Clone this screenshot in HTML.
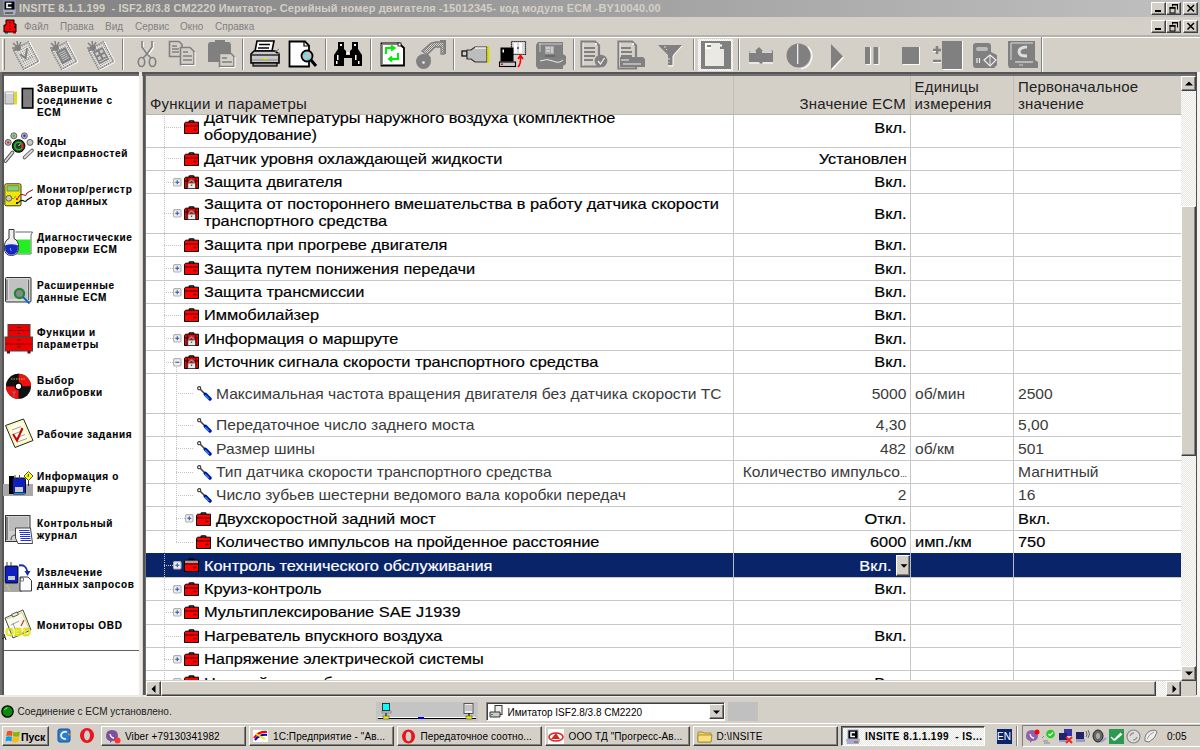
<!DOCTYPE html><html><head><meta charset="utf-8"><style>
*{margin:0;padding:0;box-sizing:border-box}
html,body{width:1200px;height:750px;overflow:hidden;background:#d4d0c8;font-family:"Liberation Sans", sans-serif;position:relative}
div,svg{position:absolute}
.ic{position:absolute}
.row{position:absolute;left:146px;width:1035px;border-bottom:1px solid #c8c8c8}
.row.sel{background:#0a246a}
.vl{position:absolute;top:0;bottom:-1px;width:1px;background:#c8c8c8}
.row.sel .vl{background:#b8bccc}
.hdot{height:1px;background-image:linear-gradient(90deg,#c4c4c4 50%,transparent 50%);background-size:2px 1px}
.vdot{width:1px;background-image:linear-gradient(180deg,#c4c4c4 50%,transparent 50%);background-size:1px 2px}
.tb{font-size:15px;line-height:18px;white-space:nowrap;transform:scaleX(1.09);transform-origin:0 0;-webkit-text-stroke:0.18px currentColor}

.tr{font-size:15px;line-height:18px;white-space:nowrap;transform:scaleX(1.04);transform-origin:0 0}
div.ra{transform-origin:100% 0}
.hd{font-size:15px;line-height:17px;letter-spacing:0.2px;color:#222;white-space:nowrap}
.lp{font-size:10px;font-weight:bold;line-height:12px;letter-spacing:0.7px;color:#000;white-space:nowrap;-webkit-text-stroke:0.15px #000}
.ddb{background:#d4d0c8;border-top:1px solid #fff;border-left:1px solid #fff;border-right:1px solid #404040;border-bottom:1px solid #404040;box-shadow:inset -1px -1px #808080}
.btn{background:#d4d0c8;border-top:1px solid #fff;border-left:1px solid #fff;border-right:1px solid #404040;border-bottom:1px solid #404040;box-shadow:inset -1px -1px #808080}
.sep{width:2px;border-left:1px solid #808080;border-right:1px solid #fff}
.dither{background-color:#e6e4df;background-image:linear-gradient(45deg,#fff 25%,transparent 25%,transparent 75%,#fff 75%),linear-gradient(45deg,#fff 25%,transparent 25%,transparent 75%,#fff 75%);background-size:2px 2px;background-position:0 0,1px 1px}
.tbtn{height:20px;top:726px;width:145px;font-size:10px;line-height:18px;white-space:nowrap;overflow:hidden;color:#000}
</style></head><body>
<div style="left:0;top:0;width:1200px;height:16.5px;background:linear-gradient(90deg,#808080,#c0c0c0)"></div>
<svg style="left:1px;top:0px" width="16" height="16" viewBox="0 0 16 16"><rect x="3" y="1" width="11" height="9" fill="#000" stroke="#9aa0d0" stroke-width="1"/><path d="M10.5 3.5 H6 V7.5 H10.5" stroke="#fff" stroke-width="1.6" fill="none"/><path d="M2 10 H15 L14 15 H3 Z" fill="#a8acc8"/><rect x="4" y="12" width="8" height="2" fill="#6b6b4a"/></svg>
<div style="left:19px;top:2px;font-size:11px;font-weight:bold;line-height:13px;letter-spacing:0.11px;color:#d4d0c8;white-space:pre">INSITE 8.1.1.199  - ISF2.8/3.8 CM2220 Имитатор- Серийный номер двигателя -15012345- код модуля ECM -BY10040.00</div>
<div class="btn" style="left:1151px;top:2px;width:15px;height:13px"><svg style="left:3px;top:7px" width="6" height="3"><rect x="0" y="0" width="6" height="2" fill="#000"/></svg></div><div class="btn" style="left:1166px;top:2px;width:15px;height:13px"><svg style="left:2px;top:1px" width="10" height="10" viewBox="0 0 10 10"><path d="M3.5 0.5 H8.5 V5.5 M3.5 1 V2.5" stroke="#000" stroke-width="1" fill="none"/><rect x="3" y="0" width="6" height="1.5" fill="#000"/><rect x="1" y="4" width="5" height="5" fill="none" stroke="#000" stroke-width="1"/><rect x="0.5" y="3" width="6" height="1.6" fill="#000"/></svg></div><div class="btn" style="left:1183px;top:2px;width:15px;height:13px"><svg style="left:2px;top:1px" width="10" height="9" viewBox="0 0 10 9"><path d="M1.5 1 L8 7.5 M8 1 L1.5 7.5" stroke="#000" stroke-width="1.5"/></svg></div>
<svg style="left:2px;top:18px" width="16" height="16" viewBox="0 0 16 16"><path d="M4 2 H12 V6 H14 V14 H2 V7 H4 Z" fill="#f00" stroke="#000" stroke-width="1"/><rect x="7" y="4" width="1.5" height="1.2" fill="#000"/><rect x="7" y="7" width="1.5" height="1.2" fill="#000"/><rect x="7" y="10" width="1.5" height="1.2" fill="#000"/><rect x="12" y="8" width="1.5" height="2" fill="#000"/><rect x="3" y="14" width="3" height="1.5" fill="#044"/><rect x="11" y="14" width="3" height="1.5" fill="#a00"/></svg>
<div style="left:24px;top:20px;font-size:10px;line-height:13px;color:#808080;white-space:nowrap">Файл</div>
<div style="left:60px;top:20px;font-size:10px;line-height:13px;color:#808080;white-space:nowrap">Правка</div>
<div style="left:105px;top:20px;font-size:10px;line-height:13px;color:#808080;white-space:nowrap">Вид</div>
<div style="left:135px;top:20px;font-size:10px;line-height:13px;color:#808080;white-space:nowrap">Сервис</div>
<div style="left:180px;top:20px;font-size:10px;line-height:13px;color:#808080;white-space:nowrap">Окно</div>
<div style="left:215px;top:20px;font-size:10px;line-height:13px;color:#808080;white-space:nowrap">Справка</div>
<div class="btn" style="left:1151px;top:20px;width:15px;height:13px"><svg style="left:3px;top:7px" width="6" height="3"><rect x="0" y="0" width="6" height="2" fill="#000"/></svg></div><div class="btn" style="left:1166px;top:20px;width:15px;height:13px"><svg style="left:2px;top:1px" width="10" height="10" viewBox="0 0 10 10"><path d="M3.5 0.5 H8.5 V5.5 M3.5 1 V2.5" stroke="#000" stroke-width="1" fill="none"/><rect x="3" y="0" width="6" height="1.5" fill="#000"/><rect x="1" y="4" width="5" height="5" fill="none" stroke="#000" stroke-width="1"/><rect x="0.5" y="3" width="6" height="1.6" fill="#000"/></svg></div><div class="btn" style="left:1183px;top:20px;width:15px;height:13px"><svg style="left:2px;top:1px" width="10" height="9" viewBox="0 0 10 9"><path d="M1.5 1 L8 7.5 M8 1 L1.5 7.5" stroke="#000" stroke-width="1.5"/></svg></div>
<div style="left:0;top:35px;width:1200px;height:2px;background:#b4b2ad"></div>
<div style="left:0;top:37px;width:1200px;height:1px;background:#fff"></div>
<div style="left:2px;top:39px;width:1px;height:31px;background:#fff"></div><div style="left:4px;top:39px;width:1px;height:31px;background:#808080"></div>
<div class="sep" style="left:122px;top:39px;height:31px"></div>
<div class="sep" style="left:242px;top:39px;height:31px"></div>
<div class="sep" style="left:325px;top:39px;height:31px"></div>
<div class="sep" style="left:370px;top:39px;height:31px"></div>
<div class="sep" style="left:453px;top:39px;height:31px"></div>
<div class="sep" style="left:573px;top:39px;height:31px"></div>
<div class="sep" style="left:693px;top:39px;height:31px"></div>
<div class="sep" style="left:738px;top:39px;height:31px"></div>
<div style="left:1041px;top:37px;width:1px;height:35px;background:#808080"></div><div style="left:1042px;top:37px;width:1px;height:35px;background:#fff"></div>
<svg style="left:10px;top:40px" width="30" height="30" viewBox="0 0 30 30"><defs><pattern id="chk" width="2" height="2" patternUnits="userSpaceOnUse"><rect width="2" height="2" fill="#e8e6e2"/><rect width="1" height="1" fill="#8a8a8a"/></pattern></defs><g transform="rotate(-28 15 15)"><rect x="7" y="5" width="17" height="22" fill="none" stroke="#ffffff" stroke-width="1.2" transform="translate(1,1)"/><rect x="7" y="5" width="17" height="22" fill="url(#chk)" stroke="#808080" stroke-width="1.4" stroke-dasharray="1.5 0.8"/><path d="M11 12 L14 18 L20 10" stroke="#808080" stroke-width="2" fill="none"/><path d="M10 20 H21 M10 16 H13" stroke="#808080" stroke-width="1" stroke-dasharray="1 1"/></g><path d="M3 3 L8 8 M7 1 L8 7 M2 8 L8 8 M4 11 L8 8 M11 2 L8 8" stroke="#808080" stroke-width="1.5"/><circle cx="8" cy="8" r="3" fill="#808080"/></svg>
<svg style="left:48px;top:40px" width="30" height="30" viewBox="0 0 30 30"><defs><pattern id="chk" width="2" height="2" patternUnits="userSpaceOnUse"><rect width="2" height="2" fill="#e8e6e2"/><rect width="1" height="1" fill="#8a8a8a"/></pattern></defs><g transform="rotate(-28 15 15)"><rect x="7" y="5" width="17" height="22" fill="none" stroke="#ffffff" stroke-width="1.2" transform="translate(1,1)"/><rect x="7" y="5" width="17" height="22" fill="url(#chk)" stroke="#808080" stroke-width="1.4" stroke-dasharray="1.5 0.8"/><rect x="10" y="9" width="11" height="14" fill="#808080"/><path d="M12 12 H19 M12 14 H19 M12 16 H19 M12 18 H19 M12 20 H19" stroke="#bbb" stroke-width="1"/></g><path d="M3 3 L8 8 M7 1 L8 7 M2 8 L8 8 M4 11 L8 8 M11 2 L8 8" stroke="#808080" stroke-width="1.5"/><circle cx="8" cy="8" r="3" fill="#808080"/></svg>
<svg style="left:85px;top:40px" width="30" height="30" viewBox="0 0 30 30"><defs><pattern id="chk" width="2" height="2" patternUnits="userSpaceOnUse"><rect width="2" height="2" fill="#e8e6e2"/><rect width="1" height="1" fill="#8a8a8a"/></pattern></defs><g transform="rotate(-28 15 15)"><rect x="7" y="5" width="17" height="22" fill="none" stroke="#ffffff" stroke-width="1.2" transform="translate(1,1)"/><rect x="7" y="5" width="17" height="22" fill="url(#chk)" stroke="#808080" stroke-width="1.4" stroke-dasharray="1.5 0.8"/><rect x="10" y="9" width="11" height="14" fill="#808080"/><rect x="11.5" y="11" width="3" height="3" fill="#ccc"/><rect x="16.5" y="11" width="3" height="3" fill="#ccc"/><rect x="11.5" y="16" width="3" height="3" fill="#ccc"/><rect x="16.5" y="16" width="3" height="3" fill="#ccc"/><path d="M11 21 H20" stroke="#ccc"/></g><path d="M3 3 L8 8 M7 1 L8 7 M2 8 L8 8 M4 11 L8 8 M11 2 L8 8" stroke="#808080" stroke-width="1.5"/><circle cx="8" cy="8" r="3" fill="#808080"/></svg>
<svg style="left:137px;top:40px" width="20" height="28" viewBox="0 0 20 28"><path d="M5 1 V7 L10 14 L15 7 V1" fill="none" stroke="#ffffff" stroke-width="1.5" transform="translate(1,1)"/><path d="M5 1 V7 L10 14 L15 7 V1" fill="none" stroke="#808080" stroke-width="1.6"/><path d="M10 14 L6 18 M10 14 L14 18" stroke="#808080" stroke-width="1.6"/><ellipse cx="4.5" cy="22" rx="3.2" ry="4.5" fill="none" stroke="#808080" stroke-width="1.6"/><ellipse cx="15.5" cy="22" rx="3.2" ry="4.5" fill="none" stroke="#808080" stroke-width="1.6"/></svg>
<svg style="left:168px;top:40px" width="30" height="26" viewBox="0 0 30 26"><path d="M1.5 1.5 H11 L14 4.5 V16.5 H1.5 Z" fill="#d4d0c8" stroke="#808080" stroke-width="1.6"/><path d="M4 6 H9 M4 9 H11 M4 12 H11" stroke="#808080" stroke-width="1.5"/><path d="M12.5 7.5 H22 L26 11.5 V24.5 H12.5 Z" fill="#d4d0c8" stroke="#808080" stroke-width="1.6"/><path d="M15 12 H20 M15 16 H24 M15 20 H24" stroke="#808080" stroke-width="1.5"/><path d="M13.5 25.5 H27 V12" fill="none" stroke="#ffffff" stroke-width="1"/></svg>
<svg style="left:206px;top:40px" width="30" height="29" viewBox="0 0 30 29"><path d="M2 5 Q2 2 5 2 H22 Q25 2 25 5 V22 H2 Z" fill="#808080"/><rect x="9" y="0" width="10" height="4" fill="#808080"/><path d="M13.5 13.5 H25 L28 16.5 V26.5 H13.5 Z" fill="#d4d0c8" stroke="#808080" stroke-width="1.6"/><path d="M16 18 H21 M16 22 H26" stroke="#808080" stroke-width="1.5"/><path d="M14 27.5 H29 V17" fill="none" stroke="#ffffff" stroke-width="1"/></svg>
<svg style="left:249px;top:40px" width="32" height="27" viewBox="0 0 32 27"><path d="M8 1 H25 L23 11 H6 Z" fill="#fff" stroke="#000" stroke-width="1.6"/><path d="M10 4.5 H21 M9 8 H20" stroke="#000" stroke-width="1.3"/><path d="M5 11 H26 L30 14 V23 H2 V14 Z" fill="#c8c8c8" stroke="#000" stroke-width="1.6"/><path d="M3 15 H29" stroke="#000" stroke-width="1.2"/><rect x="14" y="18" width="4" height="2" fill="#ee0"/><path d="M3 20 H29" stroke="#888" stroke-width="1"/><rect x="4" y="23" width="24" height="3" fill="#999" stroke="#000" stroke-width="1.2"/><path d="M26 12 L30 9 M27 14 L31 13" stroke="#777" stroke-width="1"/></svg>
<svg style="left:288px;top:40px" width="32" height="30" viewBox="0 0 32 30"><path d="M1.5 1.5 H17 L21 5.5 V26.5 H1.5 Z" fill="#fff" stroke="#000" stroke-width="1.8"/><path d="M16 2 V6 H21" fill="none" stroke="#000" stroke-width="1.2"/><circle cx="19" cy="16" r="5.5" fill="#b8c4c8" stroke="#000" stroke-width="1.8"/><rect x="16" y="13" width="2" height="2" fill="#0ff"/><rect x="19" y="18" width="2" height="2" fill="#0ff"/><path d="M23 20 L28 26" stroke="#000" stroke-width="3"/></svg>
<svg style="left:333px;top:41px" width="30" height="26" viewBox="0 0 30 26"><path d="M5 1 H11 V8 L13 10 V14 H17 V10 L19 8 V1 H25 V8 L29 14 V25 H19 V17 H11 V25 H1 V14 L5 8 Z" fill="#000"/><rect x="7" y="3" width="2" height="2" fill="#fff"/><rect x="21" y="3" width="2" height="2" fill="#fff"/><rect x="4" y="14" width="1.5" height="5" fill="#fff"/><rect x="22" y="14" width="1.5" height="5" fill="#fff"/><rect x="14" y="11" width="2" height="2" fill="#fff"/><rect x="3" y="20" width="1.5" height="3" fill="#fff"/><rect x="25" y="20" width="1.5" height="3" fill="#fff"/></svg>
<svg style="left:380px;top:42px" width="26" height="25" viewBox="0 0 26 25"><path d="M1.5 1.5 H19 L24 6 V23.5 H1.5 Z" fill="#fff" stroke="#000" stroke-width="1.8"/><path d="M2 2 H19" stroke="#888" stroke-width="1.6"/><path d="M2 2 V23" stroke="#888" stroke-width="1.6"/><rect x="18" y="1" width="3" height="3" fill="#fff" stroke="#000" stroke-width="0.8"/><path d="M6 12 V6 H13 M11 3.5 L14.5 6 L11 8.5" fill="none" stroke="#0e0" stroke-width="2"/><path d="M18 11 V17 H10 M12 14.5 L9 17 L12 19.5" fill="none" stroke="#0e0" stroke-width="2"/></svg>
<svg style="left:414px;top:40px" width="32" height="30" viewBox="0 0 32 30"><defs><pattern id="chk2" width="2" height="2" patternUnits="userSpaceOnUse"><rect width="2" height="2" fill="#d4d0c8"/><rect width="1" height="1" fill="#808080"/><rect x="1" y="1" width="1" height="1" fill="#808080"/></pattern></defs><path d="M22 2 H30 V14 H27 V7 H21 L13 15 L8 11 L17 3 Z" fill="url(#chk2)" stroke="#808080" stroke-width="1.3"/><path d="M26 1 H31 V14" fill="none" stroke="#808080" stroke-width="2"/><circle cx="9.5" cy="21.5" r="7.5" fill="#808080"/><circle cx="9.5" cy="22.5" r="1.3" fill="#eee"/><path d="M16 19 L12 14" stroke="#808080" stroke-width="3"/></svg>
<svg style="left:461px;top:45px" width="30" height="20" viewBox="0 0 30 20"><rect x="1" y="6" width="5" height="5" fill="#ccc" stroke="#000" stroke-width="1.2"/><path d="M6 5 H10 L14 2 H26 V17 H14 L10 14 H6 Z" fill="#bdbdbd" stroke="#333" stroke-width="1.2"/><path d="M14 3 H25" stroke="#fff" stroke-width="1.2"/><rect x="26" y="1" width="2.5" height="17" fill="#dd0"/><path d="M26 2 V17" stroke="#777" stroke-width="0.8" stroke-dasharray="1 1"/></svg>
<svg style="left:498px;top:40px" width="31" height="29" viewBox="0 0 31 29"><rect x="13.5" y="1.5" width="14" height="13" fill="#d8d8d8" stroke="#000" stroke-width="1.2" stroke-dasharray="1.2 0.8"/><rect x="16" y="3" width="3" height="10" fill="#fff"/><rect x="21" y="3" width="3" height="10" fill="#fff"/><path d="M19 8 H21" stroke="#000" stroke-width="1"/><rect x="2.5" y="7.5" width="13" height="14" fill="#000"/><rect x="4.5" y="9.5" width="1.5" height="3" fill="#fff"/><rect x="1.5" y="22" width="16" height="4.5" fill="#c8c8c8" stroke="#000" stroke-width="1.1"/><rect x="3" y="23.5" width="2" height="1.5" fill="#f00"/><path d="M20 27 Q23 24 22.5 17 M20 19 L22.5 15.5 L25 19" fill="none" stroke="#f00" stroke-width="1.6"/></svg>
<svg style="left:535px;top:40px" width="32" height="30" viewBox="0 0 32 30"><path d="M3 2 H28 V14 L31 16 V24 L28 26 V29 H3 L1 26 V5 Z" fill="#808080"/><path d="M5 3 V12 M4 4 L27 4" stroke="#ccc" stroke-width="1"/><rect x="10" y="6" width="9" height="8" fill="#aaa"/><path d="M11 8 H15 M11 11 H15 M17 7 V13" stroke="#eee" stroke-width="1"/><path d="M5 21 Q12 18 18 21 T28 20" fill="none" stroke="#eee" stroke-width="1"/><path d="M10 16 H20" stroke="#555" stroke-width="1"/></svg>
<svg style="left:580px;top:40px" width="29" height="29" viewBox="0 0 29 29"><path d="M1.5 1.5 H15 L19 5.5 V26.5 H1.5 Z" fill="#d4d0c8" stroke="#808080" stroke-width="2.2"/><path d="M3 2.5 V25.5" stroke="#eee" stroke-width="1"/><path d="M4 8 H15 M4 12 H15 M4 16 H15 M4 20 H13" stroke="#808080" stroke-width="2"/><circle cx="21" cy="21" r="6.3" fill="#808080"/><path d="M18 21 L20.5 24 L24.5 18" stroke="#eee" stroke-width="1.3" fill="none"/><rect x="15" y="3" width="2" height="2" fill="#eee"/></svg>
<svg style="left:617px;top:40px" width="30" height="30" viewBox="0 0 30 30"><path d="M1.5 1.5 H15 L19 5.5 V28.5 H1.5 Z" fill="#d4d0c8" stroke="#808080" stroke-width="2.2"/><path d="M3 2.5 V27.5" stroke="#eee" stroke-width="1"/><path d="M4 8 H14 M4 12 H15 M4 16 H15" stroke="#808080" stroke-width="2"/><path d="M3 17 H26 L28 19 V27 H3 Z" fill="#808080"/><path d="M6 24 H24 M4 20 H12" stroke="#eee" stroke-width="1"/><rect x="15" y="3" width="2" height="2" fill="#eee"/></svg>
<svg style="left:657px;top:44px" width="27" height="23" viewBox="0 0 27 23"><path d="M1 1 H25 L16 11 V21 H11 V11 Z" fill="#808080"/><path d="M16 12 L25 2 M16 12 V22 H11" fill="none" stroke="#fff" stroke-width="1"/><path d="M7 3 H9 M9 5 L10 6 M12 14 V16 M12 18 V19" stroke="#ddd" stroke-width="1"/></svg>
<div class="dither" style="left:698px;top:39px;width:35px;height:32px"></div>
<svg style="left:701px;top:41px" width="31" height="29" viewBox="0 0 31 29"><rect x="0" y="0" width="30" height="28" fill="#808080"/><path d="M4 2 H19 V8 H23 V25 H4 Z" fill="#ebe9e4"/><rect x="4" y="2" width="6" height="6" fill="#fff"/><rect x="6" y="4" width="4" height="2" fill="#808080"/><rect x="19" y="3.5" width="2" height="2" fill="#fff"/></svg>
<svg style="left:748px;top:46px" width="26" height="19" viewBox="0 0 26 19"><path d="M1 5 H7 L9 3 L11 1 L13 3 L15 5 H23 L24 4 L25 5 V16 H15 L13 18 L11 16 H1 Z" fill="#808080"/><path d="M1.5 6 H8 M14 6 H24" stroke="#eee" stroke-width="1.4"/><path d="M1 17 H11 M15 17 H25" stroke="#fff" stroke-width="1"/></svg>
<svg style="left:784px;top:41px" width="30" height="30" viewBox="0 0 30 30"><circle cx="14.5" cy="14.5" r="12" fill="#808080"/><path d="M24 6 A13 13 0 0 1 17 28" fill="none" stroke="#fff" stroke-width="1.2"/><rect x="13" y="3" width="1.3" height="20" fill="#eee"/></svg>
<svg style="left:829px;top:43px" width="18" height="27" viewBox="0 0 18 27"><path d="M2 1 L14 13.5 L2 26 Z" fill="#808080"/><path d="M14.5 14 L3 26.5" stroke="#fff" stroke-width="1.2"/></svg>
<svg style="left:864px;top:46px" width="17" height="20" viewBox="0 0 17 20"><rect x="1" y="1" width="5" height="17" fill="#808080"/><rect x="9.5" y="1" width="5" height="17" fill="#808080"/><path d="M6.5 1 V18.5 H2 M15 1 V18.5 H10" fill="none" stroke="#fff" stroke-width="0.9"/></svg>
<svg style="left:901px;top:46px" width="21" height="20" viewBox="0 0 21 20"><rect x="1" y="1" width="17" height="17" fill="#808080"/><path d="M18.5 1 V18.5 H2" fill="none" stroke="#fff" stroke-width="0.9"/></svg>
<svg style="left:932px;top:40px" width="32" height="30" viewBox="0 0 32 30"><rect x="10" y="1" width="20" height="28" fill="#808080"/><path d="M1 10 H9 M5 6 V14" stroke="#808080" stroke-width="2.6"/><path d="M1 21 H9" stroke="#808080" stroke-width="2.6"/><path d="M30.5 1 V29.5 H11 M1 22.5 H9 M1 11.5 H4" fill="none" stroke="#fff" stroke-width="1"/></svg>
<svg style="left:972px;top:42px" width="28" height="28" viewBox="0 0 28 28"><path d="M1 4 Q1 1 4 1 H16 Q19 1 19 4 V10 L25 13 V23 L22 26 H4 Q1 26 1 23 Z" fill="#808080"/><rect x="4" y="5" width="12" height="4" rx="2" fill="#bbb"/><path d="M5 16 V21 M7.5 16 V21" stroke="#eee" stroke-width="1.2"/><path d="M12 18 L18 13 L24 18 L18 24 Z" fill="none" stroke="#eee" stroke-width="1.2"/><path d="M18 13 V24" stroke="#eee" stroke-width="1"/></svg>
<svg style="left:1007px;top:40px" width="32" height="30" viewBox="0 0 32 30"><path d="M1 1 H28 V20 L31 22 V28 H2 L1 25 Z" fill="#808080"/><path d="M4 3 V20 M4 3 L26 3" stroke="#ddd" stroke-width="1"/><path d="M20 7 Q12 7 12 12 Q12 16 20 16" fill="none" stroke="#ddd" stroke-width="3"/><path d="M8 22 H26" stroke="#eee" stroke-width="1"/><path d="M12 25 H16" stroke="#ccc" stroke-width="1"/></svg>
<div style="left:0;top:72px;width:1200px;height:2px;background:#555"></div>
<div style="left:0;top:74px;width:1200px;height:2px;background:#707070"></div>
<div style="left:0;top:72px;width:2px;height:625px;background:#707070"></div>
<div style="left:2px;top:74px;width:2px;height:623px;background:#555"></div>
<div style="left:4px;top:76px;width:135px;height:619px;background:#fff"></div>
<div style="left:139px;top:72px;width:3px;height:625px;background:#ecebe8"></div>
<div style="left:0;top:695px;width:142px;height:2px;background:#ecebe8"></div>
<div style="left:4px;top:649.5px;width:135px;height:1.5px;background:#606060"></div>
<svg style="left:3px;top:85px" width="33" height="26" viewBox="3 85 33 26"><path d="M5 92 H14 V104 H5 Z" fill="#d0d0d0" stroke="#777" stroke-width="0.8"/><path d="M5.5 93 H13.5" stroke="#fff" stroke-width="1.2"/><rect x="14.5" y="91.5" width="2.5" height="13" fill="#e6e000"/><rect x="22.3" y="88.5" width="10.5" height="19.5" fill="#808080" stroke="#000" stroke-width="1.6"/><rect x="27" y="97.5" width="1" height="1" fill="#d33"/></svg>
<div class="lp" style="left:37px;top:83.4px">Завершить</div><div class="lp" style="left:37px;top:95.4px">соединение с</div><div class="lp" style="left:37px;top:107.4px">ECM</div>
<svg style="left:3px;top:131px" width="33" height="34" viewBox="3 131 33 34"><circle cx="8.2" cy="142.4" r="3" fill="#b8b8b8" stroke="#555" stroke-width="0.9"/><circle cx="8.2" cy="142.4" r="1.2" fill="#e22"/><circle cx="13.8" cy="135.8" r="3" fill="#b8b8b8" stroke="#555" stroke-width="0.9"/><circle cx="13.8" cy="135.8" r="1.2" fill="#2c2"/><circle cx="24.4" cy="135.8" r="3" fill="#b8b8b8" stroke="#555" stroke-width="0.9"/><circle cx="24.4" cy="135.8" r="1.2" fill="#22e"/><circle cx="30" cy="142.4" r="3" fill="#c8c8c8" stroke="#555" stroke-width="0.9"/><circle cx="18.6" cy="146" r="6.3" fill="#333" stroke="#000" stroke-width="1"/><circle cx="18.6" cy="146" r="3.8" fill="none" stroke="#1c1" stroke-width="1.5"/><path d="M21.5 143.5 A3.8 3.8 0 0 1 22 148.5" stroke="#e22" stroke-width="1.5" fill="none"/><path d="M18.6 146 L20.5 143.8" stroke="#fff" stroke-width="0.8"/><path d="M5.5 161 L12.5 152.5" stroke="#555" stroke-width="3.6" stroke-linecap="round"/><path d="M5.5 161 L12.5 152.5" stroke="#ddd" stroke-width="1.8" stroke-linecap="round"/><path d="M24.5 157.5 L32 150.5" stroke="#555" stroke-width="3.6" stroke-linecap="round"/><path d="M24.5 157.5 L32 150.5" stroke="#ddd" stroke-width="1.8" stroke-linecap="round"/></svg>
<div class="lp" style="left:37px;top:136.4px">Коды</div><div class="lp" style="left:37px;top:148.4px">неисправностей</div>
<svg style="left:3px;top:182px" width="33" height="26" viewBox="3 182 33 26"><rect x="4.8" y="183.8" width="16.2" height="22" rx="1.5" fill="#f0e800" stroke="#222" stroke-width="0.9"/><rect x="7" y="185.8" width="12" height="5.2" fill="#80d080" stroke="#555" stroke-width="0.6"/><circle cx="8.8" cy="198.3" r="2.9" fill="#c8c8c8" stroke="#444" stroke-width="0.8"/><path d="M11 198.3 Q14 200 16 196" stroke="#777" stroke-width="0.8" fill="none"/><rect x="16" y="198" width="2" height="2" fill="#e22"/><rect x="16" y="202" width="2" height="2" fill="#222"/><path d="M18 198 Q20 193 24 195 Q26 197 27 193 L33 189.5" stroke="#a00" stroke-width="1" fill="none"/><path d="M18 203 Q21 199 24 201 Q26 202 27 200 L32 197" stroke="#111" stroke-width="1.1" fill="none"/></svg>
<div class="lp" style="left:37px;top:184.4px">Монитор/регистр</div><div class="lp" style="left:37px;top:196.4px">атор данных</div>
<svg style="left:3px;top:228px" width="33" height="31" viewBox="3 228 33 31"><path d="M15.5 232 H32.5 L31 235 V254 H16" fill="#fff" stroke="#555" stroke-width="0.9"/><path d="M16.5 239.5 H30.5 V253.5 H17 Z" fill="#22ee22"/><path d="M9 229.5 H14 V238.5 Q19 241 18.6 247.5 Q18 255.5 11.5 255.5 Q4.5 255.5 4.3 248 Q4 241 9 238.5 Z" fill="#eee" stroke="#333" stroke-width="1"/><path d="M5 245.5 Q11.5 243 18 245.5 Q18.3 254.8 11.5 254.8 Q4.5 254.8 5 245.5 Z" fill="#1428c8"/><path d="M10.5 248 Q10 250 11.5 251" stroke="#9af" stroke-width="0.9" fill="none"/></svg>
<div class="lp" style="left:37px;top:232.4px">Диагностические</div><div class="lp" style="left:37px;top:244.4px">проверки ECM</div>
<svg style="left:3px;top:276px" width="31" height="29" viewBox="3 276 31 29"><rect x="5.5" y="277.5" width="25.5" height="24.5" rx="1" fill="#d8d8d8" stroke="#333" stroke-width="1"/><path d="M7 279.5 V300 M28.5 279.5 V300" stroke="#666" stroke-width="1.2"/><path d="M9 280 H27 M9 282 H27 M9 284 H27 M9 286 H27 M9 288 H27 M9 290 H27 M9 292 H27 M9 294 H27 M9 296 H27 M9 298 H27" stroke="#999" stroke-width="0.7"/><circle cx="19.5" cy="293.5" r="4.6" fill="#888" stroke="#1a8a2a" stroke-width="2.2"/><path d="M23 297 L29.5 303.5" stroke="#1060d0" stroke-width="1.8"/></svg>
<div class="lp" style="left:37px;top:280.4px">Расширенные</div><div class="lp" style="left:37px;top:292.4px">данные ECM</div>
<svg style="left:3px;top:322px" width="31" height="32" viewBox="3 322 31 32"><rect x="8" y="324.5" width="22" height="12" fill="#ee0000" stroke="#444" stroke-width="1"/><path d="M9 330.5 H29" stroke="#700" stroke-width="0.9"/><rect x="5" y="337" width="27.5" height="14" fill="#ee0000" stroke="#444" stroke-width="1"/><path d="M6 344 H31.5" stroke="#700" stroke-width="0.9"/><path d="M17 327.5 H21 M17 333.5 H21 M17 340 H21 M17 347 H21" stroke="#300" stroke-width="0.8"/><rect x="7" y="351" width="3" height="2.5" fill="#700"/><rect x="27.5" y="351" width="3" height="2.5" fill="#700"/></svg>
<div class="lp" style="left:37px;top:327.4px">Функции и</div><div class="lp" style="left:37px;top:339.4px">параметры</div>
<svg style="left:3px;top:372px" width="31" height="29" viewBox="3 372 31 29"><circle cx="18.5" cy="386.3" r="12.5" fill="#111"/><path d="M18.5 373.8 A12.5 12.5 0 0 1 31 386.3 H18.5 Z" fill="#ee1111"/><path d="M6 386.3 A12.5 12.5 0 0 0 18.5 398.8 V386.3 Z" fill="#ee1111"/><path d="M6.5 383 A12.5 12.5 0 0 1 18.5 373.8 V386.3 H6 Z" fill="#111"/><circle cx="18.5" cy="386.3" r="3.2" fill="#fff" stroke="#000" stroke-width="1.2"/><path d="M11 379 H25" stroke="#cc4" stroke-width="0.9" stroke-dasharray="1.5 1"/><path d="M12 392 H16 M14 392 V397" stroke="#888" stroke-width="0.8"/></svg>
<div class="lp" style="left:37px;top:375.4px">Выбор</div><div class="lp" style="left:37px;top:387.4px">калибровки</div>
<svg style="left:3px;top:418px" width="31" height="31" viewBox="3 418 31 31"><path d="M5.5 425.5 L23.5 419 L33 440.5 L15 447.5 Z" fill="#fffde8" stroke="#222" stroke-width="1"/><path d="M7.5 426.5 L22.5 421 L31 440 L16 445.5 Z" fill="none" stroke="#ee0" stroke-width="0.9" stroke-dasharray="1 1.5"/><path d="M12 430 L21 426.5 M14 434 L23 430.5 M16 438 L25 434.5 M17.5 442 L27 438.5" stroke="#778" stroke-width="0.7"/><path d="M13 434 L17 440.5 L22.5 428" stroke="#c00" stroke-width="2" fill="none"/></svg>
<div class="lp" style="left:37px;top:429.4px">Рабочие задания</div>
<svg style="left:2px;top:470px" width="34" height="28" viewBox="2 470 34 28"><path d="M3 484 H33 V496 H3 Z" fill="#a8a8a8"/><rect x="9" y="476" width="5" height="18" fill="#000"/><rect x="12.5" y="478" width="13" height="16" rx="1.5" fill="#1020c0" stroke="#000" stroke-width="0.9"/><path d="M15 475 V479 M19.5 475 V479" stroke="#444" stroke-width="1"/><rect x="15" y="487" width="8" height="5" fill="#ccc"/><path d="M14 493.5 H25" stroke="#0aa" stroke-width="1"/><path d="M28.5 471.5 L33 476 L28.5 480.5 L24 476 Z" fill="#ff0" stroke="#222" stroke-width="0.8"/><path d="M28.5 474 L28 477" stroke="#000" stroke-width="0.8"/><path d="M28.5 480.5 V486" stroke="#222" stroke-width="0.9"/></svg>
<div class="lp" style="left:37px;top:471.4px">Информация о</div><div class="lp" style="left:37px;top:483.4px">маршруте</div>
<svg style="left:3px;top:513px" width="31" height="33" viewBox="3 513 31 33"><rect x="5.5" y="515.5" width="24.5" height="26" fill="#d0d0d0" stroke="#333" stroke-width="1"/><path d="M7 517 V540" stroke="#666" stroke-width="1.5"/><path d="M9 518 H28 M9 520 H28 M9 522 H28 M9 524 H28 M9 526 H28 M9 528 H28 M9 530 H28" stroke="#999" stroke-width="0.7"/><path d="M15.5 528 H30.5 L32.5 543.5 H18 L15.5 538 Z" fill="#fff" stroke="#333" stroke-width="0.9"/><path d="M19 530.5 H29.5 M19.5 532.5 H30 M20 534.5 H30 M20 536.5 H30.5 M20.5 538.5 H30.5 M20.5 540.5 H31" stroke="#2233dd" stroke-width="1"/><path d="M11 540 Q11 535 15.5 535" stroke="#333" stroke-width="0.9" fill="none"/></svg>
<div class="lp" style="left:37px;top:518.4px">Контрольный</div><div class="lp" style="left:37px;top:530.4px">журнал</div>
<svg style="left:2px;top:561px" width="34" height="33" viewBox="2 561 34 33"><path d="M4 582.5 H22 V592 H4 Z" fill="#a8a8a8"/><path d="M7 585 L10 591" stroke="#ee0" stroke-width="0.9" stroke-dasharray="1.5 1"/><rect x="5" y="566" width="13" height="17" rx="1" fill="#1020c0" stroke="#000" stroke-width="0.9"/><path d="M7 562 V566 M11 562 V566" stroke="#444" stroke-width="1"/><rect x="8" y="576" width="7" height="4" fill="#ccc"/><path d="M19 565.5 Q26 564 27.5 572" stroke="#1030b0" stroke-width="1.8" fill="none"/><path d="M24.5 571 L27.5 576 L30.5 571 Z" fill="#1030b0"/><path d="M20 577 H28 L31.5 580.5 V591 H20 Z" fill="#fff" stroke="#222" stroke-width="0.9"/><rect x="20.5" y="578" width="3" height="3" fill="#fff" stroke="#333" stroke-width="0.6"/></svg>
<div class="lp" style="left:37px;top:567.4px">Извлечение</div><div class="lp" style="left:37px;top:579.4px">данных запросов</div>
<svg style="left:2px;top:608px" width="34" height="34" viewBox="2 608 34 34"><path d="M5 618 L23 610 L31 630 L13 638 Z" fill="#fafaf0" stroke="#333" stroke-width="0.9"/><path d="M6.5 619 L22 612.5 L29.5 629.5 L14 636" fill="none" stroke="#cc3" stroke-width="0.8"/><rect x="12" y="613" width="6" height="3" fill="#eee" stroke="#333" stroke-width="0.7" transform="rotate(-24 15 614.5)"/><path d="M13 623 L15 629 M11 625 L19 621" stroke="#778" stroke-width="0.7"/><path d="M21 626 L24 620" stroke="#c33" stroke-width="1.2"/><path d="M4 634 L6 640 M5 637 L2 639" stroke="#222" stroke-width="1"/><text x="18.5" y="635.5" font-family="Liberation Sans" font-weight="bold" font-size="11" text-anchor="middle" fill="#ffff00" stroke="#bb0" stroke-width="0.4" letter-spacing="0.6">OBD</text></svg>
<div class="lp" style="left:37px;top:620.4px">Мониторы OBD</div>
<div style="left:143px;top:72px;width:2px;height:625px;background:#555"></div>
<div style="left:145px;top:74px;width:1px;height:621px;background:#707070"></div>
<div style="left:1195px;top:72px;width:2px;height:625px;background:#505050"></div>
<div style="left:1197px;top:72px;width:3px;height:625px;background:#f4f3f0"></div>
<div style="left:143px;top:695px;width:1057px;height:2px;background:#f0efec"></div>
<div style="left:146px;top:76px;width:1035px;height:604px;overflow:hidden;background:#fff">
<div style="left:-146px;top:-76px;width:1200px;height:750px">
<div class="row" style="top:114.00px;height:33.50px">
<div class="vl" style="left:587.4px"></div><div class="vl" style="left:764.4px"></div><div class="vl" style="left:867.2px"></div>
</div>
<div class="hdot" style="left:164.0px;top:127.1px;width:17.0px"></div>
<svg class="ic" style="left:184px;top:120.3px" width="15" height="14" viewBox="0 0 15 14"><path d="M4.5 3 V1.6 Q4.5 0.2 6 0.2 H9 Q10.5 0.2 10.5 1.6 V3 H9.2 V1.7 H5.8 V3 Z" fill="#000"/><path d="M1.5 2.2 H14.5 V13.5 H0.5 V3.5 Z" fill="#f00" stroke="#000" stroke-width="1"/><rect x="1" y="5.2" width="13" height="1.6" fill="#8a0000"/><rect x="9.5" y="8.8" width="3" height="1.4" fill="#500"/></svg>
<div class="tb" style="left:203.8px;top:109.1px;color:#000">Датчик температуры наружного воздуха (комплектное</div>
<div class="tb" style="left:203.8px;top:125.7px;color:#000">оборудование)</div>
<div class="tb ra" style="right:293.6px;top:118.5px;color:#000">Вкл.</div>
<div class="row" style="top:146.70px;height:24.22px">
<div class="vl" style="left:587.4px"></div><div class="vl" style="left:764.4px"></div><div class="vl" style="left:867.2px"></div>
</div>
<div class="hdot" style="left:164.0px;top:158.4px;width:17.0px"></div>
<svg class="ic" style="left:184px;top:151.60999999999999px" width="15" height="14" viewBox="0 0 15 14"><path d="M4.5 3 V1.6 Q4.5 0.2 6 0.2 H9 Q10.5 0.2 10.5 1.6 V3 H9.2 V1.7 H5.8 V3 Z" fill="#000"/><path d="M1.5 2.2 H14.5 V13.5 H0.5 V3.5 Z" fill="#f00" stroke="#000" stroke-width="1"/><rect x="1" y="5.2" width="13" height="1.6" fill="#8a0000"/><rect x="9.5" y="8.8" width="3" height="1.4" fill="#500"/></svg>
<div class="tb" style="left:203.8px;top:149.8px;color:#000">Датчик уровня охлаждающей жидкости</div>
<div class="tb ra" style="right:293.6px;top:149.8px;color:#000">Установлен</div>
<div class="row" style="top:170.12px;height:24.22px">
<div class="vl" style="left:587.4px"></div><div class="vl" style="left:764.4px"></div><div class="vl" style="left:867.2px"></div>
</div>
<div class="hdot" style="left:164.0px;top:181.8px;width:17.0px"></div>
<svg class="ic" style="left:172.5px;top:177.93px" width="9" height="9" viewBox="0 0 9 9"><rect x="0.6" y="0.6" width="7.4" height="7.4" rx="1.2" fill="#f0f0ee" stroke="#b0b0b0" stroke-width="1.1"/><path d="M2.3 4.3 H6.3" stroke="#4060b8" stroke-width="1.2"/><path d="M4.3 2.3 V6.3" stroke="#4060b8" stroke-width="1.2"/></svg>
<svg class="ic" style="left:184px;top:175.03px" width="15" height="14" viewBox="0 0 15 14"><path d="M4.5 3 V1.6 Q4.5 0.2 6 0.2 H9 Q10.5 0.2 10.5 1.6 V3 H9.2 V1.7 H5.8 V3 Z" fill="#000"/><path d="M1.5 2.2 H14.5 V13.5 H0.5 V3.5 Z" fill="#f00" stroke="#000" stroke-width="1"/><rect x="1" y="5.2" width="13" height="1.6" fill="#8a0000"/><rect x="9.5" y="8.8" width="3" height="1.4" fill="#500"/><path d="M3.2 3 V13 M11.8 3 V13" stroke="#000" stroke-width="0.9"/><path d="M5.2 8.5 V6.8 Q7.5 3.6 9.8 6.8 V8.5" fill="none" stroke="#c8c8c8" stroke-width="1.4"/><path d="M5.2 8.5 V6.8 Q7.5 3.6 9.8 6.8 V8.5" fill="none" stroke="#333" stroke-width="0.5"/><rect x="3.8" y="8" width="7.6" height="5.5" fill="#e8e8e8" stroke="#333" stroke-width="0.7"/><path d="M6.6 9.8 H8.6 L7.6 11 Z" fill="#000"/></svg>
<div class="tb" style="left:203.8px;top:173.2px;color:#000">Защита двигателя</div>
<div class="tb ra" style="right:293.6px;top:173.2px;color:#000">Вкл.</div>
<div class="row" style="top:193.54px;height:40.25px">
<div class="vl" style="left:587.4px"></div><div class="vl" style="left:764.4px"></div><div class="vl" style="left:867.2px"></div>
</div>
<div class="hdot" style="left:164.0px;top:213.3px;width:17.0px"></div>
<svg class="ic" style="left:172.5px;top:209.365px" width="9" height="9" viewBox="0 0 9 9"><rect x="0.6" y="0.6" width="7.4" height="7.4" rx="1.2" fill="#f0f0ee" stroke="#b0b0b0" stroke-width="1.1"/><path d="M2.3 4.3 H6.3" stroke="#4060b8" stroke-width="1.2"/><path d="M4.3 2.3 V6.3" stroke="#4060b8" stroke-width="1.2"/></svg>
<svg class="ic" style="left:184px;top:206.465px" width="15" height="14" viewBox="0 0 15 14"><path d="M4.5 3 V1.6 Q4.5 0.2 6 0.2 H9 Q10.5 0.2 10.5 1.6 V3 H9.2 V1.7 H5.8 V3 Z" fill="#000"/><path d="M1.5 2.2 H14.5 V13.5 H0.5 V3.5 Z" fill="#f00" stroke="#000" stroke-width="1"/><rect x="1" y="5.2" width="13" height="1.6" fill="#8a0000"/><rect x="9.5" y="8.8" width="3" height="1.4" fill="#500"/><path d="M3.2 3 V13 M11.8 3 V13" stroke="#000" stroke-width="0.9"/><path d="M5.2 8.5 V6.8 Q7.5 3.6 9.8 6.8 V8.5" fill="none" stroke="#c8c8c8" stroke-width="1.4"/><path d="M5.2 8.5 V6.8 Q7.5 3.6 9.8 6.8 V8.5" fill="none" stroke="#333" stroke-width="0.5"/><rect x="3.8" y="8" width="7.6" height="5.5" fill="#e8e8e8" stroke="#333" stroke-width="0.7"/><path d="M6.6 9.8 H8.6 L7.6 11 Z" fill="#000"/></svg>
<div class="tb" style="left:203.8px;top:195.3px;color:#000">Защита от постороннего вмешательства в работу датчика скорости</div>
<div class="tb" style="left:203.8px;top:211.9px;color:#000">транспортного средства</div>
<div class="tb ra" style="right:293.6px;top:204.7px;color:#000">Вкл.</div>
<div class="row" style="top:232.99px;height:24.22px">
<div class="vl" style="left:587.4px"></div><div class="vl" style="left:764.4px"></div><div class="vl" style="left:867.2px"></div>
</div>
<div class="hdot" style="left:164.0px;top:244.7px;width:17.0px"></div>
<svg class="ic" style="left:184px;top:237.9px" width="15" height="14" viewBox="0 0 15 14"><path d="M4.5 3 V1.6 Q4.5 0.2 6 0.2 H9 Q10.5 0.2 10.5 1.6 V3 H9.2 V1.7 H5.8 V3 Z" fill="#000"/><path d="M1.5 2.2 H14.5 V13.5 H0.5 V3.5 Z" fill="#f00" stroke="#000" stroke-width="1"/><rect x="1" y="5.2" width="13" height="1.6" fill="#8a0000"/><rect x="9.5" y="8.8" width="3" height="1.4" fill="#500"/></svg>
<div class="tb" style="left:203.8px;top:236.1px;color:#000">Защита при прогреве двигателя</div>
<div class="tb ra" style="right:293.6px;top:236.1px;color:#000">Вкл.</div>
<div class="row" style="top:256.41px;height:24.22px">
<div class="vl" style="left:587.4px"></div><div class="vl" style="left:764.4px"></div><div class="vl" style="left:867.2px"></div>
</div>
<div class="hdot" style="left:164.0px;top:268.1px;width:17.0px"></div>
<svg class="ic" style="left:172.5px;top:264.22px" width="9" height="9" viewBox="0 0 9 9"><rect x="0.6" y="0.6" width="7.4" height="7.4" rx="1.2" fill="#f0f0ee" stroke="#b0b0b0" stroke-width="1.1"/><path d="M2.3 4.3 H6.3" stroke="#4060b8" stroke-width="1.2"/><path d="M4.3 2.3 V6.3" stroke="#4060b8" stroke-width="1.2"/></svg>
<svg class="ic" style="left:184px;top:261.32px" width="15" height="14" viewBox="0 0 15 14"><path d="M4.5 3 V1.6 Q4.5 0.2 6 0.2 H9 Q10.5 0.2 10.5 1.6 V3 H9.2 V1.7 H5.8 V3 Z" fill="#000"/><path d="M1.5 2.2 H14.5 V13.5 H0.5 V3.5 Z" fill="#f00" stroke="#000" stroke-width="1"/><rect x="1" y="5.2" width="13" height="1.6" fill="#8a0000"/><rect x="9.5" y="8.8" width="3" height="1.4" fill="#500"/></svg>
<div class="tb" style="left:203.8px;top:259.5px;color:#000">Защита путем понижения передачи</div>
<div class="tb ra" style="right:293.6px;top:259.5px;color:#000">Вкл.</div>
<div class="row" style="top:279.83px;height:24.22px">
<div class="vl" style="left:587.4px"></div><div class="vl" style="left:764.4px"></div><div class="vl" style="left:867.2px"></div>
</div>
<div class="hdot" style="left:164.0px;top:291.5px;width:17.0px"></div>
<svg class="ic" style="left:172.5px;top:287.64000000000004px" width="9" height="9" viewBox="0 0 9 9"><rect x="0.6" y="0.6" width="7.4" height="7.4" rx="1.2" fill="#f0f0ee" stroke="#b0b0b0" stroke-width="1.1"/><path d="M2.3 4.3 H6.3" stroke="#4060b8" stroke-width="1.2"/><path d="M4.3 2.3 V6.3" stroke="#4060b8" stroke-width="1.2"/></svg>
<svg class="ic" style="left:184px;top:284.74px" width="15" height="14" viewBox="0 0 15 14"><path d="M4.5 3 V1.6 Q4.5 0.2 6 0.2 H9 Q10.5 0.2 10.5 1.6 V3 H9.2 V1.7 H5.8 V3 Z" fill="#000"/><path d="M1.5 2.2 H14.5 V13.5 H0.5 V3.5 Z" fill="#f00" stroke="#000" stroke-width="1"/><rect x="1" y="5.2" width="13" height="1.6" fill="#8a0000"/><rect x="9.5" y="8.8" width="3" height="1.4" fill="#500"/></svg>
<div class="tb" style="left:203.8px;top:282.9px;color:#000">Защита трансмиссии</div>
<div class="tb ra" style="right:293.6px;top:282.9px;color:#000">Вкл.</div>
<div class="row" style="top:303.25px;height:24.22px">
<div class="vl" style="left:587.4px"></div><div class="vl" style="left:764.4px"></div><div class="vl" style="left:867.2px"></div>
</div>
<div class="hdot" style="left:164.0px;top:315.0px;width:17.0px"></div>
<svg class="ic" style="left:184px;top:308.16px" width="15" height="14" viewBox="0 0 15 14"><path d="M4.5 3 V1.6 Q4.5 0.2 6 0.2 H9 Q10.5 0.2 10.5 1.6 V3 H9.2 V1.7 H5.8 V3 Z" fill="#000"/><path d="M1.5 2.2 H14.5 V13.5 H0.5 V3.5 Z" fill="#f00" stroke="#000" stroke-width="1"/><rect x="1" y="5.2" width="13" height="1.6" fill="#8a0000"/><rect x="9.5" y="8.8" width="3" height="1.4" fill="#500"/></svg>
<div class="tb" style="left:203.8px;top:306.4px;color:#000">Иммобилайзер</div>
<div class="tb ra" style="right:293.6px;top:306.4px;color:#000">Вкл.</div>
<div class="row" style="top:326.67px;height:24.22px">
<div class="vl" style="left:587.4px"></div><div class="vl" style="left:764.4px"></div><div class="vl" style="left:867.2px"></div>
</div>
<div class="hdot" style="left:164.0px;top:338.4px;width:17.0px"></div>
<svg class="ic" style="left:172.5px;top:334.4800000000001px" width="9" height="9" viewBox="0 0 9 9"><rect x="0.6" y="0.6" width="7.4" height="7.4" rx="1.2" fill="#f0f0ee" stroke="#b0b0b0" stroke-width="1.1"/><path d="M2.3 4.3 H6.3" stroke="#4060b8" stroke-width="1.2"/><path d="M4.3 2.3 V6.3" stroke="#4060b8" stroke-width="1.2"/></svg>
<svg class="ic" style="left:184px;top:331.58000000000004px" width="15" height="14" viewBox="0 0 15 14"><path d="M4.5 3 V1.6 Q4.5 0.2 6 0.2 H9 Q10.5 0.2 10.5 1.6 V3 H9.2 V1.7 H5.8 V3 Z" fill="#000"/><path d="M1.5 2.2 H14.5 V13.5 H0.5 V3.5 Z" fill="#f00" stroke="#000" stroke-width="1"/><rect x="1" y="5.2" width="13" height="1.6" fill="#8a0000"/><rect x="9.5" y="8.8" width="3" height="1.4" fill="#500"/><path d="M3.2 3 V13 M11.8 3 V13" stroke="#000" stroke-width="0.9"/><path d="M5.2 8.5 V6.8 Q7.5 3.6 9.8 6.8 V8.5" fill="none" stroke="#c8c8c8" stroke-width="1.4"/><path d="M5.2 8.5 V6.8 Q7.5 3.6 9.8 6.8 V8.5" fill="none" stroke="#333" stroke-width="0.5"/><rect x="3.8" y="8" width="7.6" height="5.5" fill="#e8e8e8" stroke="#333" stroke-width="0.7"/><path d="M6.6 9.8 H8.6 L7.6 11 Z" fill="#000"/></svg>
<div class="tb" style="left:203.8px;top:329.8px;color:#000">Информация о маршруте</div>
<div class="tb ra" style="right:293.6px;top:329.8px;color:#000">Вкл.</div>
<div class="row" style="top:350.09px;height:24.22px">
<div class="vl" style="left:587.4px"></div><div class="vl" style="left:764.4px"></div><div class="vl" style="left:867.2px"></div>
</div>
<div class="hdot" style="left:164.0px;top:361.8px;width:17.0px"></div>
<svg class="ic" style="left:172.5px;top:357.9000000000001px" width="9" height="9" viewBox="0 0 9 9"><rect x="0.6" y="0.6" width="7.4" height="7.4" rx="1.2" fill="#f0f0ee" stroke="#b0b0b0" stroke-width="1.1"/><path d="M2.3 4.3 H6.3" stroke="#4060b8" stroke-width="1.2"/></svg>
<svg class="ic" style="left:184px;top:355.00000000000006px" width="15" height="14" viewBox="0 0 15 14"><path d="M4.5 3 V1.6 Q4.5 0.2 6 0.2 H9 Q10.5 0.2 10.5 1.6 V3 H9.2 V1.7 H5.8 V3 Z" fill="#000"/><path d="M1.5 2.2 H14.5 V13.5 H0.5 V3.5 Z" fill="#f00" stroke="#000" stroke-width="1"/><rect x="1" y="5.2" width="13" height="1.6" fill="#8a0000"/><rect x="9.5" y="8.8" width="3" height="1.4" fill="#500"/><path d="M3.2 3 V13 M11.8 3 V13" stroke="#000" stroke-width="0.9"/><path d="M5.2 8.5 V6.8 Q7.5 3.6 9.8 6.8 V8.5" fill="none" stroke="#c8c8c8" stroke-width="1.4"/><path d="M5.2 8.5 V6.8 Q7.5 3.6 9.8 6.8 V8.5" fill="none" stroke="#333" stroke-width="0.5"/><rect x="3.8" y="8" width="7.6" height="5.5" fill="#e8e8e8" stroke="#333" stroke-width="0.7"/><path d="M6.6 9.8 H8.6 L7.6 11 Z" fill="#000"/></svg>
<div class="tb" style="left:203.8px;top:353.2px;color:#000">Источник сигнала скорости транспортного средства</div>
<div class="tb ra" style="right:293.6px;top:353.2px;color:#000">Вкл.</div>
<div class="row" style="top:373.51px;height:40.25px">
<div class="vl" style="left:587.4px"></div><div class="vl" style="left:764.4px"></div><div class="vl" style="left:867.2px"></div>
</div>
<div class="hdot" style="left:176.0px;top:393.2px;width:17.0px"></div>
<svg class="ic" style="left:197px;top:386.2350000000001px" width="15" height="15" viewBox="0 0 15 15"><path d="M3 3 L8 8" stroke="#444" stroke-width="1.6"/><circle cx="2.2" cy="2.2" r="1.6" fill="#fff" stroke="#333" stroke-width="1.1"/><path d="M8.3 8.3 L13 13" stroke="#0010a0" stroke-width="3.4" stroke-linecap="round"/><path d="M8 9 L12 13" stroke="#1e8cff" stroke-width="1.6"/></svg>
<div class="tr" style="left:215.6px;top:384.6px;color:#3a3a3a">Максимальная частота вращения двигателя без датчика скорости ТС</div>
<div class="tr ra" style="right:293.6px;top:384.6px;color:#3a3a3a">5000</div>
<div class="tr" style="left:915.4px;top:384.6px;color:#3a3a3a">об/мин</div>
<div class="tr" style="left:1018.2px;top:384.6px;color:#3a3a3a">2500</div>
<div class="row" style="top:412.96px;height:24.22px">
<div class="vl" style="left:587.4px"></div><div class="vl" style="left:764.4px"></div><div class="vl" style="left:867.2px"></div>
</div>
<div class="hdot" style="left:176.0px;top:424.7px;width:17.0px"></div>
<svg class="ic" style="left:197px;top:417.6700000000001px" width="15" height="15" viewBox="0 0 15 15"><path d="M3 3 L8 8" stroke="#444" stroke-width="1.6"/><circle cx="2.2" cy="2.2" r="1.6" fill="#fff" stroke="#333" stroke-width="1.1"/><path d="M8.3 8.3 L13 13" stroke="#0010a0" stroke-width="3.4" stroke-linecap="round"/><path d="M8 9 L12 13" stroke="#1e8cff" stroke-width="1.6"/></svg>
<div class="tr" style="left:215.6px;top:416.1px;color:#3a3a3a">Передаточное число заднего моста</div>
<div class="tr ra" style="right:293.6px;top:416.1px;color:#3a3a3a">4,30</div>
<div class="tr" style="left:1018.2px;top:416.1px;color:#3a3a3a">5,00</div>
<div class="row" style="top:436.38px;height:24.22px">
<div class="vl" style="left:587.4px"></div><div class="vl" style="left:764.4px"></div><div class="vl" style="left:867.2px"></div>
</div>
<div class="hdot" style="left:176.0px;top:448.1px;width:17.0px"></div>
<svg class="ic" style="left:197px;top:441.0900000000001px" width="15" height="15" viewBox="0 0 15 15"><path d="M3 3 L8 8" stroke="#444" stroke-width="1.6"/><circle cx="2.2" cy="2.2" r="1.6" fill="#fff" stroke="#333" stroke-width="1.1"/><path d="M8.3 8.3 L13 13" stroke="#0010a0" stroke-width="3.4" stroke-linecap="round"/><path d="M8 9 L12 13" stroke="#1e8cff" stroke-width="1.6"/></svg>
<div class="tr" style="left:215.6px;top:439.5px;color:#3a3a3a">Размер шины</div>
<div class="tr ra" style="right:293.6px;top:439.5px;color:#3a3a3a">482</div>
<div class="tr" style="left:915.4px;top:439.5px;color:#3a3a3a">об/км</div>
<div class="tr" style="left:1018.2px;top:439.5px;color:#3a3a3a">501</div>
<div class="row" style="top:459.80px;height:24.22px">
<div class="vl" style="left:587.4px"></div><div class="vl" style="left:764.4px"></div><div class="vl" style="left:867.2px"></div>
</div>
<div class="hdot" style="left:176.0px;top:471.5px;width:17.0px"></div>
<svg class="ic" style="left:197px;top:464.5100000000001px" width="15" height="15" viewBox="0 0 15 15"><path d="M3 3 L8 8" stroke="#444" stroke-width="1.6"/><circle cx="2.2" cy="2.2" r="1.6" fill="#fff" stroke="#333" stroke-width="1.1"/><path d="M8.3 8.3 L13 13" stroke="#0010a0" stroke-width="3.4" stroke-linecap="round"/><path d="M8 9 L12 13" stroke="#1e8cff" stroke-width="1.6"/></svg>
<div class="tr" style="left:215.6px;top:462.9px;color:#3a3a3a">Тип датчика скорости транспортного средства</div>
<div class="tr ra" style="right:293.6px;top:462.9px;color:#3a3a3a">Количество импульсо<span style="font-size:9px;letter-spacing:-0.4px">...</span></div>
<div class="tr" style="left:1018.2px;top:462.9px;color:#3a3a3a">Магнитный</div>
<div class="row" style="top:483.22px;height:24.22px">
<div class="vl" style="left:587.4px"></div><div class="vl" style="left:764.4px"></div><div class="vl" style="left:867.2px"></div>
</div>
<div class="hdot" style="left:176.0px;top:494.9px;width:17.0px"></div>
<svg class="ic" style="left:197px;top:487.9300000000001px" width="15" height="15" viewBox="0 0 15 15"><path d="M3 3 L8 8" stroke="#444" stroke-width="1.6"/><circle cx="2.2" cy="2.2" r="1.6" fill="#fff" stroke="#333" stroke-width="1.1"/><path d="M8.3 8.3 L13 13" stroke="#0010a0" stroke-width="3.4" stroke-linecap="round"/><path d="M8 9 L12 13" stroke="#1e8cff" stroke-width="1.6"/></svg>
<div class="tr" style="left:215.6px;top:486.3px;color:#3a3a3a">Число зубьев шестерни ведомого вала коробки передач</div>
<div class="tr ra" style="right:293.6px;top:486.3px;color:#3a3a3a">2</div>
<div class="tr" style="left:1018.2px;top:486.3px;color:#3a3a3a">16</div>
<div class="row" style="top:506.64px;height:24.22px">
<div class="vl" style="left:587.4px"></div><div class="vl" style="left:764.4px"></div><div class="vl" style="left:867.2px"></div>
</div>
<div class="hdot" style="left:176.0px;top:518.4px;width:17.0px"></div>
<svg class="ic" style="left:184.5px;top:514.4500000000002px" width="9" height="9" viewBox="0 0 9 9"><rect x="0.6" y="0.6" width="7.4" height="7.4" rx="1.2" fill="#f0f0ee" stroke="#b0b0b0" stroke-width="1.1"/><path d="M2.3 4.3 H6.3" stroke="#4060b8" stroke-width="1.2"/><path d="M4.3 2.3 V6.3" stroke="#4060b8" stroke-width="1.2"/></svg>
<svg class="ic" style="left:196px;top:511.5500000000001px" width="15" height="14" viewBox="0 0 15 14"><path d="M4.5 3 V1.6 Q4.5 0.2 6 0.2 H9 Q10.5 0.2 10.5 1.6 V3 H9.2 V1.7 H5.8 V3 Z" fill="#000"/><path d="M1.5 2.2 H14.5 V13.5 H0.5 V3.5 Z" fill="#f00" stroke="#000" stroke-width="1"/><rect x="1" y="5.2" width="13" height="1.6" fill="#8a0000"/><rect x="9.5" y="8.8" width="3" height="1.4" fill="#500"/></svg>
<div class="tb" style="left:215.6px;top:509.8px;color:#000">Двухскоростной задний мост</div>
<div class="tb ra" style="right:293.6px;top:509.8px;color:#000">Откл.</div>
<div class="tb" style="left:1018.2px;top:509.8px;color:#000">Вкл.</div>
<div class="row" style="top:530.06px;height:24.22px">
<div class="vl" style="left:587.4px"></div><div class="vl" style="left:764.4px"></div><div class="vl" style="left:867.2px"></div>
</div>
<div class="hdot" style="left:176.0px;top:541.8px;width:17.0px"></div>
<svg class="ic" style="left:196px;top:534.9700000000003px" width="15" height="14" viewBox="0 0 15 14"><path d="M4.5 3 V1.6 Q4.5 0.2 6 0.2 H9 Q10.5 0.2 10.5 1.6 V3 H9.2 V1.7 H5.8 V3 Z" fill="#000"/><path d="M1.5 2.2 H14.5 V13.5 H0.5 V3.5 Z" fill="#f00" stroke="#000" stroke-width="1"/><rect x="1" y="5.2" width="13" height="1.6" fill="#8a0000"/><rect x="9.5" y="8.8" width="3" height="1.4" fill="#500"/></svg>
<div class="tb" style="left:215.6px;top:533.2px;color:#000">Количество импульсов на пройденное расстояние</div>
<div class="tb ra" style="right:293.6px;top:533.2px;color:#000">6000</div>
<div class="tb" style="left:915.4px;top:533.2px;color:#000">имп./км</div>
<div class="tb" style="left:1018.2px;top:533.2px;color:#000">750</div>
<div class="row sel" style="top:553.48px;height:24.22px">
<div class="vl" style="left:587.4px"></div><div class="vl" style="left:764.4px"></div><div class="vl" style="left:867.2px"></div>
</div>
<div class="hdot" style="left:164.0px;top:565.2px;width:17.0px"></div>
<svg class="ic" style="left:172.5px;top:561.2900000000002px" width="9" height="9" viewBox="0 0 9 9"><rect x="0.6" y="0.6" width="7.4" height="7.4" rx="1.2" fill="#f0f0ee" stroke="#b0b0b0" stroke-width="1.1"/><path d="M2.3 4.3 H6.3" stroke="#4060b8" stroke-width="1.2"/><path d="M4.3 2.3 V6.3" stroke="#4060b8" stroke-width="1.2"/></svg>
<svg class="ic" style="left:184px;top:558.3900000000002px" width="15" height="14" viewBox="0 0 15 14"><path d="M4.5 3 V1.6 Q4.5 0.2 6 0.2 H9 Q10.5 0.2 10.5 1.6 V3 H9.2 V1.7 H5.8 V3 Z" fill="#000"/><path d="M1.5 2.2 H14.5 V13.5 H0.5 V3.5 Z" fill="#f00" stroke="#000" stroke-width="1"/><rect x="1" y="5.2" width="13" height="1.6" fill="#8a0000"/><rect x="1" y="2.7" width="13" height="2.3" fill="#a0a0a0"/><rect x="9.5" y="8.8" width="3" height="1.4" fill="#500"/></svg>
<div class="tb" style="left:203.8px;top:556.6px;color:#fff">Контроль технического обслуживания</div>
<div class="tb ra" style="right:308.6px;top:556.6px;color:#fff">Вкл.</div>
<div class="ddb" style="left:895.5px;top:554.5px;width:14px;height:21.9px"><svg width="14" height="21" viewBox="0 0 14 21" style="position:absolute;left:0;top:0"><path d="M3.5 8.2 H10.5 L7 11.7 Z" fill="#000"/></svg></div>
<div class="row" style="top:576.90px;height:24.22px">
<div class="vl" style="left:587.4px"></div><div class="vl" style="left:764.4px"></div><div class="vl" style="left:867.2px"></div>
</div>
<div class="hdot" style="left:164.0px;top:588.6px;width:17.0px"></div>
<svg class="ic" style="left:172.5px;top:584.7100000000002px" width="9" height="9" viewBox="0 0 9 9"><rect x="0.6" y="0.6" width="7.4" height="7.4" rx="1.2" fill="#f0f0ee" stroke="#b0b0b0" stroke-width="1.1"/><path d="M2.3 4.3 H6.3" stroke="#4060b8" stroke-width="1.2"/><path d="M4.3 2.3 V6.3" stroke="#4060b8" stroke-width="1.2"/></svg>
<svg class="ic" style="left:184px;top:581.8100000000002px" width="15" height="14" viewBox="0 0 15 14"><path d="M4.5 3 V1.6 Q4.5 0.2 6 0.2 H9 Q10.5 0.2 10.5 1.6 V3 H9.2 V1.7 H5.8 V3 Z" fill="#000"/><path d="M1.5 2.2 H14.5 V13.5 H0.5 V3.5 Z" fill="#f00" stroke="#000" stroke-width="1"/><rect x="1" y="5.2" width="13" height="1.6" fill="#8a0000"/><rect x="9.5" y="8.8" width="3" height="1.4" fill="#500"/></svg>
<div class="tb" style="left:203.8px;top:580.0px;color:#000">Круиз-контроль</div>
<div class="tb ra" style="right:293.6px;top:580.0px;color:#000">Вкл.</div>
<div class="row" style="top:600.32px;height:24.22px">
<div class="vl" style="left:587.4px"></div><div class="vl" style="left:764.4px"></div><div class="vl" style="left:867.2px"></div>
</div>
<div class="hdot" style="left:164.0px;top:612.0px;width:17.0px"></div>
<svg class="ic" style="left:172.5px;top:608.1300000000001px" width="9" height="9" viewBox="0 0 9 9"><rect x="0.6" y="0.6" width="7.4" height="7.4" rx="1.2" fill="#f0f0ee" stroke="#b0b0b0" stroke-width="1.1"/><path d="M2.3 4.3 H6.3" stroke="#4060b8" stroke-width="1.2"/><path d="M4.3 2.3 V6.3" stroke="#4060b8" stroke-width="1.2"/></svg>
<svg class="ic" style="left:184px;top:605.2300000000001px" width="15" height="14" viewBox="0 0 15 14"><path d="M4.5 3 V1.6 Q4.5 0.2 6 0.2 H9 Q10.5 0.2 10.5 1.6 V3 H9.2 V1.7 H5.8 V3 Z" fill="#000"/><path d="M1.5 2.2 H14.5 V13.5 H0.5 V3.5 Z" fill="#f00" stroke="#000" stroke-width="1"/><rect x="1" y="5.2" width="13" height="1.6" fill="#8a0000"/><rect x="9.5" y="8.8" width="3" height="1.4" fill="#500"/></svg>
<div class="tb" style="left:203.8px;top:603.4px;color:#000">Мультиплексирование SAE J1939</div>
<div class="row" style="top:623.74px;height:24.22px">
<div class="vl" style="left:587.4px"></div><div class="vl" style="left:764.4px"></div><div class="vl" style="left:867.2px"></div>
</div>
<div class="hdot" style="left:164.0px;top:635.5px;width:17.0px"></div>
<svg class="ic" style="left:184px;top:628.6500000000001px" width="15" height="14" viewBox="0 0 15 14"><path d="M4.5 3 V1.6 Q4.5 0.2 6 0.2 H9 Q10.5 0.2 10.5 1.6 V3 H9.2 V1.7 H5.8 V3 Z" fill="#000"/><path d="M1.5 2.2 H14.5 V13.5 H0.5 V3.5 Z" fill="#f00" stroke="#000" stroke-width="1"/><rect x="1" y="5.2" width="13" height="1.6" fill="#8a0000"/><rect x="9.5" y="8.8" width="3" height="1.4" fill="#500"/></svg>
<div class="tb" style="left:203.8px;top:626.9px;color:#000">Нагреватель впускного воздуха</div>
<div class="tb ra" style="right:293.6px;top:626.9px;color:#000">Вкл.</div>
<div class="row" style="top:647.16px;height:24.22px">
<div class="vl" style="left:587.4px"></div><div class="vl" style="left:764.4px"></div><div class="vl" style="left:867.2px"></div>
</div>
<div class="hdot" style="left:164.0px;top:658.9px;width:17.0px"></div>
<svg class="ic" style="left:172.5px;top:654.97px" width="9" height="9" viewBox="0 0 9 9"><rect x="0.6" y="0.6" width="7.4" height="7.4" rx="1.2" fill="#f0f0ee" stroke="#b0b0b0" stroke-width="1.1"/><path d="M2.3 4.3 H6.3" stroke="#4060b8" stroke-width="1.2"/><path d="M4.3 2.3 V6.3" stroke="#4060b8" stroke-width="1.2"/></svg>
<svg class="ic" style="left:184px;top:652.07px" width="15" height="14" viewBox="0 0 15 14"><path d="M4.5 3 V1.6 Q4.5 0.2 6 0.2 H9 Q10.5 0.2 10.5 1.6 V3 H9.2 V1.7 H5.8 V3 Z" fill="#000"/><path d="M1.5 2.2 H14.5 V13.5 H0.5 V3.5 Z" fill="#f00" stroke="#000" stroke-width="1"/><rect x="1" y="5.2" width="13" height="1.6" fill="#8a0000"/><rect x="9.5" y="8.8" width="3" height="1.4" fill="#500"/></svg>
<div class="tb" style="left:203.8px;top:650.3px;color:#000">Напряжение электрической системы</div>
<div class="row" style="top:670.58px;height:24.22px">
<div class="vl" style="left:587.4px"></div><div class="vl" style="left:764.4px"></div><div class="vl" style="left:867.2px"></div>
</div>
<div class="hdot" style="left:164.0px;top:682.3px;width:17.0px"></div>
<svg class="ic" style="left:172.5px;top:678.39px" width="9" height="9" viewBox="0 0 9 9"><rect x="0.6" y="0.6" width="7.4" height="7.4" rx="1.2" fill="#f0f0ee" stroke="#b0b0b0" stroke-width="1.1"/><path d="M2.3 4.3 H6.3" stroke="#4060b8" stroke-width="1.2"/><path d="M4.3 2.3 V6.3" stroke="#4060b8" stroke-width="1.2"/></svg>
<svg class="ic" style="left:184px;top:675.49px" width="15" height="14" viewBox="0 0 15 14"><path d="M4.5 3 V1.6 Q4.5 0.2 6 0.2 H9 Q10.5 0.2 10.5 1.6 V3 H9.2 V1.7 H5.8 V3 Z" fill="#000"/><path d="M1.5 2.2 H14.5 V13.5 H0.5 V3.5 Z" fill="#f00" stroke="#000" stroke-width="1"/><rect x="1" y="5.2" width="13" height="1.6" fill="#8a0000"/><rect x="9.5" y="8.8" width="3" height="1.4" fill="#500"/></svg>
<div class="tb" style="left:203.8px;top:673.7px;color:#000">Настройки коробки передач</div>
<div class="tb ra" style="right:293.6px;top:673.7px;color:#000">Вкл.</div>
<div class="vdot" style="left:164px;top:114px;height:570px"></div>
<div class="vdot" style="left:176px;top:367px;height:175px"></div>
<div style="left:146px;top:76px;width:1035px;height:38px;background:#d4d0c8"></div>
<div style="left:733.4px;top:76px;width:1px;height:38px;background:#c0beb8"></div>
<div style="left:910.4px;top:76px;width:1px;height:38px;background:#c0beb8"></div>
<div style="left:1013.2px;top:76px;width:1px;height:38px;background:#c0beb8"></div>
<div style="left:146px;top:113.5px;width:1035px;height:1px;background:#b8b6b0"></div>
<div class="hd" style="left:150px;top:95px">Функции и параметры</div>
<div class="hd" style="right:294px;top:95px">Значение ECM</div>
<div class="hd" style="left:914.5px;top:78px">Единицы</div>
<div class="hd" style="left:914.5px;top:95px">измерения</div>
<div class="hd" style="left:1018px;top:78px">Первоначальное</div>
<div class="hd" style="left:1018px;top:95px">значение</div>
</div></div>
<div class="dither" style="left:1181px;top:76px;width:14.7px;height:604.7px"></div>
<div class="btn" style="left:1181.3px;top:76px;width:14.3px;height:14.7px"><svg style="left:3px;top:4px" width="8" height="5"><path d="M0 4.5 L4 0.5 L8 4.5 Z" fill="#000"/></svg></div>
<div class="btn" style="left:1181.3px;top:206px;width:14.3px;height:250px"></div>
<div class="btn" style="left:1181.3px;top:666px;width:14.3px;height:14.7px"><svg style="left:3px;top:4px" width="8" height="5"><path d="M0 0.5 L4 4.5 L8 0.5 Z" fill="#000"/></svg></div>
<div class="dither" style="left:146px;top:680.7px;width:1035px;height:15px"></div>
<div class="btn" style="left:146px;top:680.7px;width:14.7px;height:15px"><svg style="left:4px;top:3px" width="5" height="8"><path d="M4.5 0 L0.5 4 L4.5 8 Z" fill="#000"/></svg></div>
<div class="btn" style="left:161px;top:680.7px;width:995px;height:15px"></div>
<div class="btn" style="left:1166.3px;top:680.7px;width:14.7px;height:15px"><svg style="left:5px;top:3px" width="5" height="8"><path d="M0.5 0 L4.5 4 L0.5 8 Z" fill="#000"/></svg></div>
<div style="left:1181px;top:680.7px;width:14.7px;height:15px;background:#d4d0c8"></div>
<div style="left:0;top:697px;width:1200px;height:26px;background:#d4d0c8"></div>
<svg style="left:1px;top:705px" width="13" height="13" viewBox="0 0 13 13"><circle cx="6.5" cy="6.5" r="5.7" fill="#0a8a0a" stroke="#000" stroke-width="1.2"/><path d="M3.5 5 Q4.5 3 6.5 2.8" stroke="#8f8" stroke-width="1" fill="none"/></svg>
<div style="left:17.5px;top:705px;font-size:10px;line-height:13px;color:#222;white-space:nowrap">Соединение с ECM установлено.</div>
<div style="left:376px;top:702px;width:102px;height:19px;background:#c4c4c4"></div>
<div style="left:378px;top:718px;width:98px;height:1px;background:#000"></div><div style="left:378px;top:717px;width:98px;height:1px;background:#fff"></div><div style="left:418px;top:717px;width:6px;height:1.5px;background:#00c"></div>
<svg style="left:381px;top:703px" width="12" height="17" viewBox="0 0 12 17"><rect x="1.5" y="0.5" width="7" height="7" fill="#0ff" stroke="#333"/><rect x="1" y="8" width="9" height="2" fill="#ccc" stroke="#555" stroke-width="0.5"/><path d="M5 10 V14" stroke="#000"/><rect x="2" y="13" width="6" height="3" fill="#ee0" stroke="#333" stroke-width="0.5"/></svg>
<svg style="left:463px;top:703px" width="12" height="17" viewBox="0 0 12 17"><rect x="1" y="0.5" width="9" height="10" fill="#eee" stroke="#555"/><path d="M2 3 H9 M2 5 H9 M2 7 H9" stroke="#999"/><path d="M6 10 V14" stroke="#000"/><rect x="3" y="13" width="6" height="3" fill="#ee0" stroke="#333" stroke-width="0.5"/></svg>
<div style="left:486px;top:702px;width:239px;height:19px;background:#fff;border-top:1px solid #808080;border-left:1px solid #808080;border-right:1px solid #fff;border-bottom:1px solid #fff;box-shadow:inset 1px 1px #404040"></div>
<svg style="left:489px;top:705px" width="16" height="13" viewBox="0 0 16 13"><rect x="6" y="0.5" width="7" height="9" fill="#eee" stroke="#333"/><path d="M1 7 H11 V12 H1 Z" fill="#ccc" stroke="#333"/><rect x="2" y="9" width="2" height="1" fill="#0a0"/></svg>
<div style="left:507.5px;top:706px;font-size:10px;line-height:13px;color:#000;white-space:nowrap">Имитатор ISF2.8/3.8 CM2220</div>
<div class="btn" style="left:709px;top:704px;width:14.5px;height:15px"><svg style="left:3px;top:5px" width="8" height="5"><path d="M0 0.5 L7 0.5 L3.5 4 Z" fill="#000"/></svg></div>
<div style="left:728px;top:702px;width:30px;height:19px;background:#c0c0c0"></div>
<div style="left:0;top:723px;width:1200px;height:27px;background:#d4d0c8;border-top:1px solid #fff"></div>
<div class="btn" style="left:2px;top:726px;width:47px;height:20px"><svg style="left:2px;top:1.5px" width="16" height="15" viewBox="0 0 16 15"><path d="M2 2.5 Q4.5 1 7.5 2.5 L7 7 Q4 5.8 1.3 7 Z" fill="#f25022"/><path d="M8.3 2.8 Q11.5 4 14.8 2.5 L14.2 7.2 Q11 8.3 7.8 7.3 Z" fill="#7fba00"/><path d="M1.2 7.8 Q4 6.6 7 7.8 L6.5 12.5 Q3.5 11.2 0.6 12.4 Z" fill="#00a4ef"/><path d="M7.7 8.1 Q11 9.2 14.1 8 L13.5 12.6 Q10.3 13.8 7.2 12.7 Z" fill="#ffb900"/></svg><div style="left:18px;top:1.5px;font-size:10.5px;font-weight:bold;line-height:16px;letter-spacing:0px">Пуск</div></div>
<svg style="left:57px;top:728px" width="15" height="15" viewBox="0 0 15 15"><rect x="1" y="1" width="12" height="13" rx="2" fill="#2a7fd4" stroke="#1a4f94"/><path d="M10 4 Q5 3 4 7 Q4 11 9 11" stroke="#fff" stroke-width="1.6" fill="none"/><path d="M11 6 L14 7" stroke="#f80" stroke-width="1.5"/></svg>
<svg style="left:79px;top:727px" width="16" height="17" viewBox="0 0 16 17"><ellipse cx="8" cy="8.5" rx="7" ry="7.5" fill="#e8141f"/><ellipse cx="8" cy="8.5" rx="3" ry="5" fill="#d4d0c8"/></svg>
<div class="tbtn btn" style="left:101px;width:145px"><svg style="left:3px;top:2px" width="16" height="15" viewBox="0 0 16 15"><path d="M7 1 Q13 1 13 7 Q13 12 7 12 L5 14 V12 Q1 11 1 7 Q1 1 7 1 Z" fill="#7b519d"/><path d="M5 5 Q6 9 9 9" stroke="#fff" stroke-width="1.3" fill="none"/><circle cx="12.5" cy="11.5" r="3" fill="#f33"/></svg><div style="left:23px;top:1.8px;font-size:10px;font-weight:normal;letter-spacing:0.1px;line-height:16px;white-space:nowrap">Viber +79130341982</div></div>
<div class="tbtn btn" style="left:249px;width:145px"><svg style="left:3px;top:2px" width="16" height="15" viewBox="0 0 16 15"><rect x="0" y="1" width="15" height="12" fill="#fff"/><path d="M1 9 Q6 2 14 3" stroke="#f00" stroke-width="2" fill="none"/><path d="M2 11 Q7 5 14 6" stroke="#00c" stroke-width="2" fill="none"/><path d="M3 5 L12 10" stroke="#ee0" stroke-width="2"/></svg><div style="left:23px;top:1.8px;font-size:10px;font-weight:normal;letter-spacing:0.1px;line-height:16px;white-space:nowrap">1С:Предприятие - "Ав...</div></div>
<div class="tbtn btn" style="left:396.5px;width:145px"><svg style="left:3px;top:2px" width="15" height="15" viewBox="0 0 15 15"><ellipse cx="7.5" cy="7.5" rx="6.5" ry="7" fill="#e8141f"/><ellipse cx="7.5" cy="7.5" rx="2.8" ry="4.7" fill="#d4d0c8"/></svg><div style="left:23px;top:1.8px;font-size:10px;font-weight:normal;letter-spacing:0.1px;line-height:16px;white-space:nowrap">Передаточное соотно...</div></div>
<div class="tbtn btn" style="left:544.5px;width:145px"><svg style="left:2px;top:2px" width="16" height="15" viewBox="0 0 16 15"><rect x="0" y="0" width="16" height="15" fill="#fff"/><ellipse cx="8" cy="8" rx="7" ry="4" fill="none" stroke="#d22" stroke-width="1.6"/><path d="M3 10 L8 4 L12 10" fill="#d22"/></svg><div style="left:23px;top:1.8px;font-size:10px;font-weight:normal;letter-spacing:0.1px;line-height:16px;white-space:nowrap">ООО ТД "Прогресс-Ав...</div></div>
<div class="tbtn btn" style="left:692.5px;width:145px"><svg style="left:3px;top:2px" width="16" height="15" viewBox="0 0 16 15"><path d="M1 3 H6 L7 4 H14 V13 H1 Z" fill="#f0d060" stroke="#a08020" stroke-width="0.8"/><path d="M1 6 H15 L14 13 H1 Z" fill="#f8e080" stroke="#a08020" stroke-width="0.8"/></svg><div style="left:23px;top:1.8px;font-size:10px;font-weight:normal;letter-spacing:0.1px;line-height:16px;white-space:nowrap">D:\INSITE</div></div>
<div class="tbtn dither" style="left:841px;width:144px;border-top:1px solid #404040;border-left:1px solid #404040;border-right:1px solid #fff;border-bottom:1px solid #fff;box-shadow:inset 1px 1px #808080"><svg style="left:3px;top:2px" width="16" height="16" viewBox="0 0 16 16"><rect x="3" y="1" width="10" height="9" fill="#000" stroke="#9aa0d0" stroke-width="1"/><path d="M10 3.5 H6 V7.5 H10" stroke="#fff" stroke-width="1.5" fill="none"/><path d="M1 10 H15 L14 15 H2 Z" fill="#a8acc8"/><rect x="9" y="12" width="4" height="2" fill="#a75"/></svg><div style="left:23px;top:1.8px;font-size:10px;font-weight:bold;letter-spacing:0.45px;line-height:16px;white-space:nowrap">INSITE 8.1.1.199&nbsp; - IS...</div></div>
<div style="left:996.5px;top:729.3px;width:15px;height:14.7px;background:#0a246a;color:#fff;font-size:10px;line-height:15px;text-align:center">EN</div>
<div style="left:1016px;top:726px;width:2px;height:20px;border-left:1px solid #808080;border-right:1px solid #fff"></div>
<div style="left:1022px;top:725.3px;width:178px;height:22px;border-top:1px solid #808080;border-left:1px solid #808080;border-bottom:1px solid #fff"></div>
<svg style="left:1025px;top:729px" width="15" height="15" viewBox="0 0 15 15"><path d="M7 1 Q13 1 13 7 Q13 12 7 12 L5 14 V12 Q1 11 1 7 Q1 1 7 1 Z" fill="#8a62b0"/><path d="M5 5 Q6 9 9 9" stroke="#fff" stroke-width="1.3" fill="none"/><circle cx="12" cy="3" r="2.5" fill="#f00"/></svg>
<svg style="left:1041px;top:729px" width="15" height="15" viewBox="0 0 15 15"><circle cx="9.5" cy="5" r="4.3" fill="#2c2"/><path d="M7.5 5 L9 6.5 L12 3.5" stroke="#fff" stroke-width="1.2" fill="none"/><path d="M1 9 L3 7 M2 12 H7 M3 14 H9" stroke="#888" stroke-width="1"/></svg>
<svg style="left:1058px;top:729px" width="17" height="15" viewBox="0 0 17 15"><rect x="6" y="0" width="8" height="7" fill="#33a"/><rect x="1" y="4" width="8" height="7" fill="#226"/><rect x="1" y="11" width="8" height="2" fill="#99c"/><path d="M8 8 L14 14 M14 8 L8 14" stroke="#e22" stroke-width="2"/></svg>
<svg style="left:1075px;top:729px" width="16" height="15" viewBox="0 0 16 15"><rect x="1" y="3" width="8" height="7" fill="#226"/><rect x="1" y="10" width="9" height="3" fill="#99c"/><path d="M11 2 Q13 5 11 8 M13 1 Q16 5 13 9" stroke="#666" stroke-width="1" fill="none"/></svg>
<svg style="left:1092px;top:729px" width="15" height="15" viewBox="0 0 15 15"><ellipse cx="6" cy="7" rx="5" ry="6" fill="#666" stroke="#222"/><ellipse cx="6" cy="7" rx="2" ry="3" fill="#aaa"/><path d="M9 13 L14 9" stroke="#99d" stroke-width="2"/></svg>
<svg style="left:1109px;top:729px" width="15" height="15" viewBox="0 0 15 15"><rect x="0" y="0" width="15" height="15" fill="#2a9a50"/><path d="M2 8 L5 11 L12 4 M6 11 L13 5" stroke="#fff" stroke-width="1.3" fill="none"/></svg>
<svg style="left:1126px;top:729px" width="15" height="15" viewBox="0 0 15 15"><circle cx="7.5" cy="7.5" r="6.5" fill="#ddd" stroke="#888" stroke-width="1.2"/><path d="M4 7 Q5 4 8 4 M11 8 Q10 11 7 11" stroke="#999" stroke-width="1.3" fill="none"/></svg>
<svg style="left:1143px;top:729px" width="15" height="15" viewBox="0 0 15 15"><path d="M2 12 Q1 5 7 2 Q13 0 14 3 Q13 9 6 13 Z" fill="#eee" stroke="#777" stroke-width="1"/><path d="M4 10 Q6 5 11 3" stroke="#999" fill="none"/></svg>
<div style="left:1167px;top:730px;font-size:10px;line-height:13px;color:#000">0:05</div>
</body></html>
